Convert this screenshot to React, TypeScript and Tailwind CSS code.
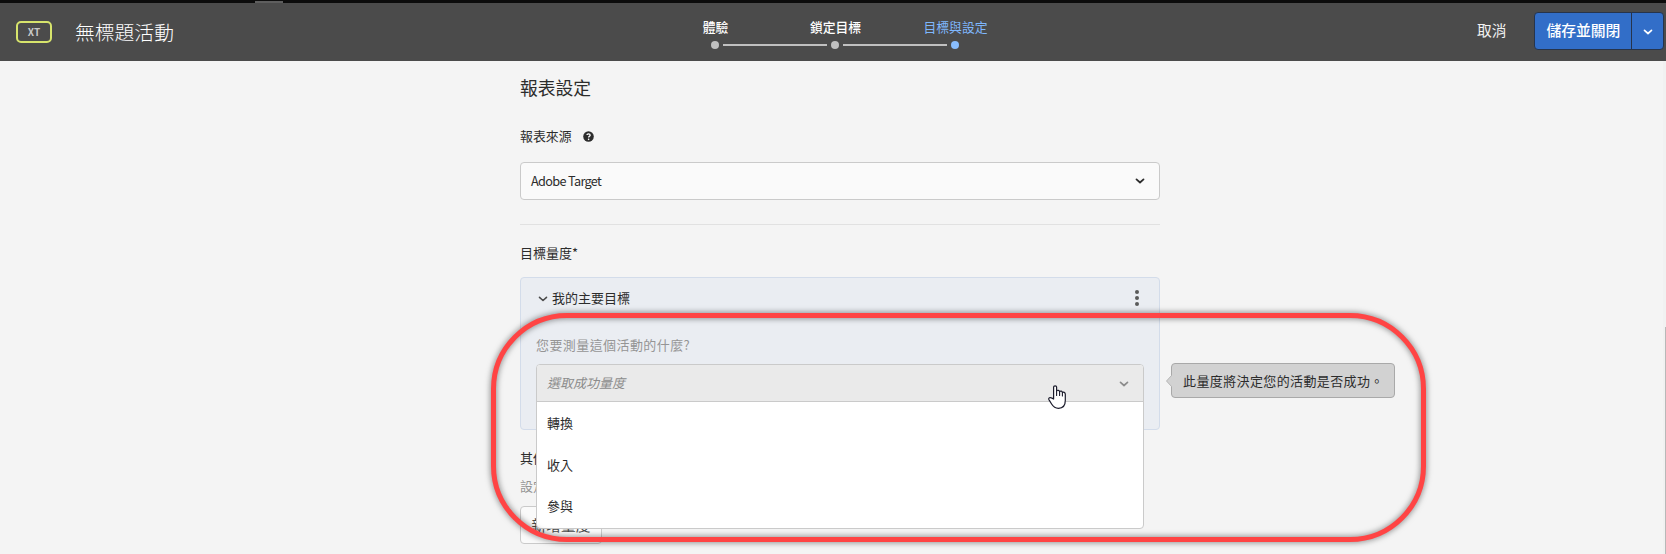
import React from 'react';

const FONT = "font-['Noto_Sans_CJK_TC','Noto_Sans',sans-serif]";

function Chevron({ className, width = 1.8 }: { className?: string; width?: number }) {
  return (
    <svg viewBox="0 0 10 6" className={`h-[6px] w-[10px] shrink-0 ${className ?? ''}`} fill="none" stroke="currentColor" strokeWidth={width} strokeLinecap="round" strokeLinejoin="round">
      <path d="M1.5 1.4 5 4.5 8.5 1.4" />
    </svg>
  );
}

const steps = [
  { label: '體驗', active: false },
  { label: '鎖定目標', active: false },
  { label: '目標與設定', active: true },
];

function Steps() {
  return (
    <div className="ml-[482px] flex pt-[14px]">
      {steps.map((step, i) => (
        <div key={step.label} className="relative flex w-[120px] flex-col items-center">
          <span
            className={`pl-px text-[12.8px] leading-[20px] whitespace-nowrap ${step.active ? 'text-[#7fb7fc]' : 'font-medium text-white'}`}
          >
            {step.label}
          </span>
          <span className={`mt-[4px] h-2 w-2 rounded-full ${step.active ? 'bg-[#89bdfd]' : 'bg-[#c0c0c0]'}`} />
          {i < steps.length - 1 && <span className="absolute top-[27px] left-[68px] h-[2px] w-[104px] bg-[#c0c0c0]" />}
        </div>
      ))}
    </div>
  );
}

function Header() {
  return (
    <header className="flex h-[58px] shrink-0 bg-[#4b4b4b]">
      <div className="mt-[18px] ml-4 flex h-[22px] w-9 items-center justify-center rounded-[5px] border-2 border-[#d7e46c] text-[10px] leading-none font-bold text-[#c8c8c8]">
        XT
      </div>
      <h1 className="ml-[23px] w-[98px] pt-[15px] text-[19.8px] leading-[28px] font-light whitespace-nowrap text-white">無標題活動</h1>
      <Steps />
      <span className="ml-[462px] pt-[16px] text-[14.7px] leading-[21px] whitespace-nowrap text-[#f2f2f2]">取消</span>
      <div className="mt-[9px] ml-[28px] flex h-[38px] w-[130px] overflow-hidden rounded-[4px] border border-[#26344c] bg-[#326ec8] text-white">
        <span className="w-[97px] border-r border-[#26344c] pl-[11px] text-[14.8px] leading-[34px] font-medium whitespace-nowrap">儲存並關閉</span>
        <span className="flex flex-1 items-center justify-center pt-[2px]">
          <Chevron className="h-[5px] w-[8px]" width={1.7} />
        </span>
      </div>
    </header>
  );
}

function HelpIcon() {
  return (
    <svg viewBox="0 0 10 10" className="h-[11px] w-[11px]">
      <circle cx="5" cy="5" r="4.8" fill="#2c2c2c" />
      <path d="M3.6 3.7C3.7 2.2 6.5 2.1 6.5 3.8 6.5 4.8 5.1 4.9 5.1 6" fill="none" stroke="#fff" strokeWidth="1.2" />
      <circle cx="5.1" cy="7.6" r=".75" fill="#fff" />
    </svg>
  );
}

const options = ['轉換', '收入', '參與'];

function MetricSelect() {
  return (
    <div className="absolute top-[86px] left-[15px] z-10 w-[608px] overflow-hidden rounded-[4px] border border-[#cacaca] bg-white">
      <div className="flex h-[37px] items-center justify-between border-b border-[#cacaca] bg-[#eaeaea] pr-[14px] pl-[10px] text-[#8c8c8c]">
        <span className="-mt-px text-[13px] leading-[20px] italic">選取成功量度</span>
        <Chevron className="mt-px" width={1.7} />
      </div>
      <ul className="flex h-[126px] flex-col text-[13px] text-[#2c2c2c]">
        {options.map((o) => (
          <li key={o} className="h-[41.7px] pl-[10px] leading-[41px]">{o}</li>
        ))}
      </ul>
    </div>
  );
}

function Tooltip() {
  return (
    <div className="absolute top-[85px] left-[650px] h-[35px] w-[224px] rounded-[4px] border border-[#a9a9a9] bg-[#d2d2d2] pl-[11px] text-[13px] leading-[33px] tracking-[0.38px] whitespace-nowrap text-[#2c2c2c]">
      此量度將決定您的活動是否成功。
      <svg viewBox="0 0 6 12" className="absolute top-[11px] -left-[6px] h-3 w-[6px]">
        <path d="M6 0 .5 6 6 12" fill="#d2d2d2" stroke="#b5b5b5" />
      </svg>
    </div>
  );
}

function HandCursor() {
  return (
    <svg viewBox="0 0 18 24" className="absolute top-[385px] left-[1048px] z-20 h-6 w-[18px]">
      <path
        d="M5.6 14V2.1C5.6.4 8.6.4 8.6 2.1V5.8C9.6 4.8 11.5 5.2 11.6 6.6 12.6 5.7 14.3 6.1 14.4 7.5 15.4 6.8 17.3 7.3 17.3 9.2V15.5C17.3 20.4 14.8 23.3 10.5 23.3 7 23.3 5 21.3 3.6 19L.9 14.6C.2 13 2.1 12 3.5 12.9Z"
        fill="#fff"
        stroke="#1b1b2b"
        strokeWidth="1.2"
        strokeLinejoin="round"
      />
      <path d="M8.6 5.8V10.5M11.6 6.6V10.5M14.4 7.5V11" fill="none" stroke="#1b1b2b" strokeWidth="1.1" strokeLinecap="round" />
    </svg>
  );
}

export default function App() {
  return (
    <div lang="zh-Hant" className={`relative flex h-[554px] w-[1666px] flex-col overflow-hidden bg-[#f4f4f4] text-[#2c2c2c] ${FONT}`}>
      <div className="flex h-[3px] shrink-0 items-end bg-[#0c0c0c]">
        <div className="ml-[255px] h-[2px] w-7 bg-[#5e5e5e]" />
      </div>
      <Header />
      <main className="ml-[520px] w-[640px]">
        <h2 className="pt-[12px] text-[17.8px] leading-[28px] font-normal">報表設定</h2>
        <div className="mt-[25px] flex h-5 items-center text-[12.9px] leading-[20px]">
          報表來源
          <span className="ml-[11.5px]">
            <HelpIcon />
          </span>
        </div>
        <div className="mt-[16px] flex h-[38px] items-center justify-between rounded-[4px] border border-[#cacaca] bg-[#fafafa] pr-[14px] pl-[10px]">
          <span className="text-[12.7px] tracking-[-0.66px]">Adobe Target</span>
          <Chevron />
        </div>
        <hr className="mt-[24px] border-t border-[#e1e1e1]" />
        <div className="mt-[18px] text-[13px] leading-[20px]">目標量度*</div>
        <section className="relative mt-[14px] h-[153px] rounded-[4px] border border-[#d3dcea] bg-[#eaedf2]">
          <div className="flex h-[40px] items-center pr-[20px] pl-[17px]">
            <Chevron className="mt-[2px] text-[#4b4b4b]" width={1.6} />
            <span className="ml-[4px] flex-1 text-[13px] leading-[20px]">我的主要目標</span>
            <svg viewBox="0 0 4 16" className="h-4 w-1" fill="#5a5a5a">
              <circle cx="2" cy="2" r="2" />
              <circle cx="2" cy="8" r="2" />
              <circle cx="2" cy="14" r="2" />
            </svg>
          </div>
          <p className="pt-[17px] pl-[15px] text-[13px] leading-[20px] tracking-[0.42px] text-[#959595]">您要測量這個活動的什麼?</p>
          <MetricSelect />
          <Tooltip />
        </section>
        <div className="mt-[18px] text-[13px] leading-[20px]">其他量度</div>
        <p className="mt-[8px] text-[13px] leading-[20px] text-[#959595]">設定</p>
        <button className="mt-[10px] flex h-[38px] w-[82px] items-center justify-center rounded-[4px] border border-[#cacaca] bg-[#fafafa] text-[14.7px] text-[#4b4b4b]">
          新增量度
        </button>
      </main>
      <div className="absolute top-[313px] left-[491px] z-20 h-[229px] w-[935px] rounded-[76px] border-[5px] border-[#ff4444] [filter:drop-shadow(0_0_3px_rgba(0,0,0,0.55))]" />
      <HandCursor />
      <div className="absolute top-[61px] right-0 h-[493px] w-[3px] bg-[#f1f1f1]">
        <div className="mt-[266px] ml-[2px] h-[227px] w-px bg-[#b8b8b8]" />
      </div>
    </div>
  );
}
